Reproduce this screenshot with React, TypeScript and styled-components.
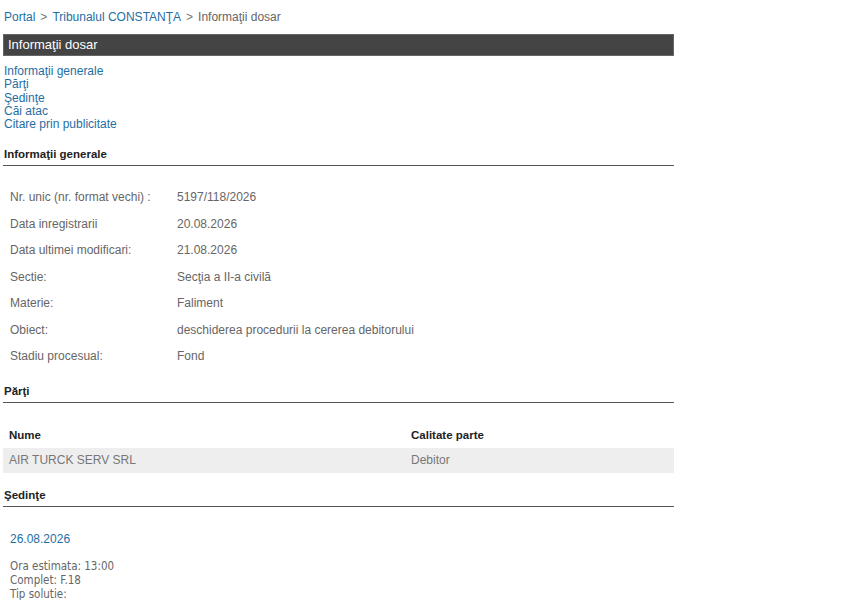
import React from 'react';
import styled, {createGlobalStyle} from 'styled-components';

const GlobalStyle = createGlobalStyle`
    html, body {
        margin: 0;
        padding: 0;
        background: #fff;
    }

    body {
        font-family: 'Liberation Sans', Arial, sans-serif;
        font-size: 12px;
        color: #333;
    }
`;

const generalInfo: Array<[string, string]> = [
    ['Nr. unic (nr. format vechi) :', '5197/118/2026'],
    ['Data inregistrarii', '20.08.2026'],
    ['Data ultimei modificari:', '21.08.2026'],
    ['Sectie:', 'Secţia a II-a civilă'],
    ['Materie:', 'Faliment'],
    ['Obiect:', 'deschiderea procedurii la cererea debitorului'],
    ['Stadiu procesual:', 'Fond'],
];

const sectionLinks = [
    'Informaţii generale',
    'Părţi',
    'Şedinţe',
    'Căi atac',
    'Citare prin publicitate',
];

export default function App() {
    return (
        <>
            <GlobalStyle/>
            <Page>
                <Breadcrumb>
                    <CrumbLink href='#'>{'Portal'}</CrumbLink>
                    <Sep>{'>'}</Sep>
                    <CrumbLink href='#'>{'Tribunalul CONSTANŢA'}</CrumbLink>
                    <Sep>{'>'}</Sep>
                    <Current>{'Informaţii dosar'}</Current>
                </Breadcrumb>

                <TitleBar>{'Informaţii dosar'}</TitleBar>

                <LinkList>
                    {sectionLinks.map((l) => (
                        <SectionLink
                            key={l}
                            href='#'
                        >
                            {l}
                        </SectionLink>
                    ))}
                </LinkList>

                <SectionHeading $top={16}>{'Informaţii generale'}</SectionHeading>
                <InfoTable>
                    {generalInfo.map(([label, value]) => (
                        <InfoRow key={label}>
                            <InfoLabel>{label}</InfoLabel>
                            <InfoValue>{value}</InfoValue>
                        </InfoRow>
                    ))}
                </InfoTable>

                <SectionHeading $top={14}>{'Părţi'}</SectionHeading>
                <PartiesTable>
                    <PartiesHead>
                        <HeadCell>{'Nume'}</HeadCell>
                        <HeadCell>{'Calitate parte'}</HeadCell>
                    </PartiesHead>
                    <PartiesRow $shaded={true}>
                        <BodyCell>{'AIR TURCK SERV SRL'}</BodyCell>
                        <BodyCell>{'Debitor'}</BodyCell>
                    </PartiesRow>
                </PartiesTable>

                <SectionHeading $top={15}>{'Şedinţe'}</SectionHeading>
                <Hearing>
                    <HearingDate>{'26.08.2026'}</HearingDate>
                    <HearingDetails>
                        <div>{'Ora estimata: 13:00'}</div>
                        <div>{'Complet: F.18'}</div>
                        <div>{'Tip solutie:'}</div>
                    </HearingDetails>
                </Hearing>
            </Page>
        </>
    );
}

const Page = styled.div`
    width: 671px;
    padding: 10px 0 0 3px;
`;

const Breadcrumb = styled.div`
    display: flex;
    align-items: baseline;
    gap: 5px;
    padding-left: 1px;
    height: 16px;
    font-size: 12px;
`;

const CrumbLink = styled.a`
    color: #1f6ea3;
    text-decoration: none;
`;

const Sep = styled.span`
    color: #777;
`;

const Current = styled.span`
    color: #666;
`;

const TitleBar = styled.div`
    margin-top: 8px;
    height: 20px;
    line-height: 20px;
    padding-left: 4px;
    background: #444;
    border: 1px solid #666;
    color: #fff;
    font-size: 13px;
`;

const LinkList = styled.div`
    display: flex;
    flex-direction: column;
    align-items: flex-start;
    margin-top: 9px;
    padding-left: 1px;
`;

const SectionLink = styled.a`
    color: #1f6ea3;
    text-decoration: none;
    font-size: 12px;
    line-height: 13.3px;
`;

const SectionHeading = styled.div<{$top?: number}>`
    margin-top: ${(p) => p.$top ?? 15}px;
    padding: 0 0 4px 1px;
    border-bottom: 1px solid #555;
    font-weight: bold;
    font-size: 11.5px;
    color: #222;
    line-height: 14px;
`;

const InfoTable = styled.div`
    display: flex;
    flex-direction: column;
    padding-top: 18px;
`;

const InfoRow = styled.div`
    display: grid;
    grid-template-columns: 167px 1fr;
    padding-left: 7px;
    height: 26.5px;
    line-height: 26.5px;
    font-size: 12px;
    color: #666;
`;

const InfoLabel = styled.span``;

const InfoValue = styled.span``;

const PartiesTable = styled.div`
    display: flex;
    flex-direction: column;
    padding-top: 19px;
`;

const PartiesHead = styled.div`
    display: grid;
    grid-template-columns: 402px 1fr;
    height: 26px;
    align-items: center;
    padding-left: 6px;
`;

const PartiesRow = styled.div<{$shaded?: boolean}>`
    display: grid;
    grid-template-columns: 402px 1fr;
    height: 25px;
    align-items: center;
    padding-left: 6px;
    background: ${(p) => (p.$shaded ? '#eee' : 'transparent')};
`;

const HeadCell = styled.span`
    font-weight: bold;
    font-size: 11.5px;
    color: #222;
`;

const BodyCell = styled.span`
    font-size: 12px;
    color: #777;
`;

const Hearing = styled.div`
    padding: 25px 0 0 7px;
`;

const HearingDate = styled.div`
    color: #1f6ea3;
    font-size: 12px;
    line-height: 15px;
`;

const HearingDetails = styled.div`
    margin-top: 12px;
    font-family: 'DejaVu Sans Condensed', 'Liberation Sans', sans-serif;
    font-size: 11.5px;
    line-height: 14px;
    color: #666;
`;
